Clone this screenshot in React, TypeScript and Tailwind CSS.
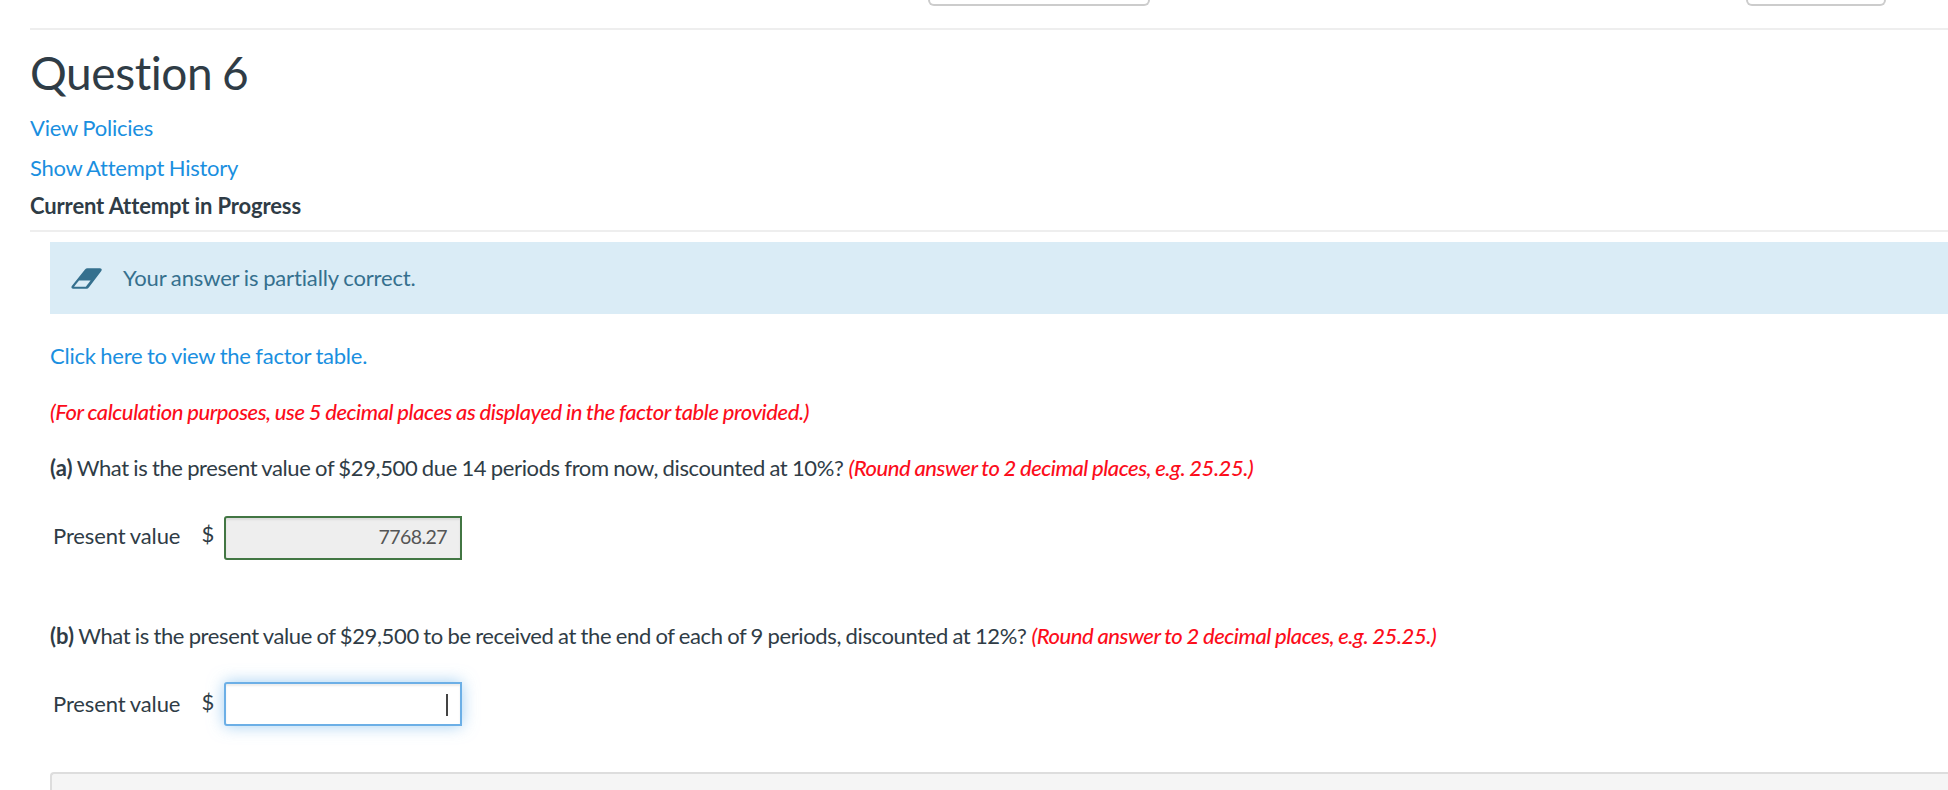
import React from 'react';

interface QuestionProps {
    part: string;
    children: React.ReactNode;
    hint: string;
}

const Question: React.FC<QuestionProps> = ({ part, children, hint }) => {
    return (
        <p>
            <b>({part})</b>
            <span className="ml-[4.2px] tracking-[-0.375px] [word-spacing:-0.7px]">{children}</span>
            <em className="ml-[5px] font-medium tracking-[-0.44px] text-[#fc0d1b] [word-spacing:-0.5px]">{hint}</em>
        </p>
    );
};

interface AnswerProps {
    value?: string;
    active?: boolean;
}

const Answer: React.FC<AnswerProps> = ({ value, active }) => {
    const state = active
        ? 'bg-white border-[#6cafe6] shadow-[inset_0_2px_2px_rgba(0,0,0,0.075),0_0_16px_rgba(102,175,233,0.6)]'
        : 'bg-[#eeeeee] border-[#427643] shadow-[inset_0_2px_2px_rgba(0,0,0,0.075)]';

    return (
        <div className="flex items-start pl-[3px]">
            <div className={`flex ${active ? 'pt-[7px]' : 'pt-[5px]'}`}>
                <span className="w-[148.5px] tracking-[-0.12px] [word-spacing:-0.7px]">Present value</span>
                <span className="-mt-0.5 w-[22.5px]">$</span>
            </div>
            <div
                className={`flex h-[44px] w-[238px] items-center justify-end rounded-l-[3px] border-2 pr-3 text-[19.5px] text-[#555555] ${state}`}
            >
                {value && <span className="mr-px pb-[3px] tracking-[-0.55px]">{value}</span>}
                {active && <span className="mt-[2px] h-[22px] w-[2px] bg-[#444444]" />}
            </div>
        </div>
    );
};

const EraserIcon: React.FC = () => (
    <svg width="31" height="21" viewBox="0 0 31 21" fill="none">
        <path d="M16.5 0.3H29Q31.6 0.5 30.3 3L18 19.2Q17 20.7 15.5 20.7H2Q-0.4 20.3 0.8 18L14 1.5Q15 0.3 16.5 0.3Z" fill="#35708e" />
        <path d="M8 12.4H19.6L14.8 18.7H3Z" fill="#daecf6" />
    </svg>
);

const App: React.FC = () => {
    return (
        <div
            className="h-[790px] overflow-hidden bg-white pl-[30px] text-[22px] leading-[30px] text-[#2f3c46] [font-family:Lato,sans-serif] [font-variant-ligatures:none]"
        >
            <div className="flex h-[28px] items-start justify-between pl-[898px] pr-[62px]">
                <div className="h-[6px] w-[222px] rounded-b-[6px] border-2 border-t-0 border-[#cccccc]" />
                <div className="h-[6px] w-[140px] rounded-b-[6px] border-2 border-t-0 border-[#cccccc]" />
            </div>
            <hr className="border-t-2 border-[#eeeeee]" />

            <h1 className="mt-[15px] text-[46px] leading-[56px] tracking-[-0.42px] [word-spacing:-1.6px]">Question 6</h1>
            <p className="mt-[12px] tracking-[-0.23px] text-[#1a8fe0] [word-spacing:-0.7px]">View Policies</p>
            <p className="mt-[10px] tracking-[-0.25px] text-[#1a8fe0] [word-spacing:-0.7px]">Show Attempt History</p>
            <p className="mt-[8px] font-bold tracking-[-0.13px]">Current Attempt in Progress</p>
            <hr className="mt-[9px] border-t-2 border-[#eeeeee]" />

            <div className="pl-[20px]">
                <div className="mt-[10px] flex h-[72px] items-center bg-[#daecf6] pl-[21px] text-[#35708e]">
                    <EraserIcon />
                    <span className="ml-[21px] tracking-[-0.14px] [word-spacing:-0.7px]">Your answer is partially correct.</span>
                </div>

                <p className="mt-[27px] mb-[26px] tracking-[-0.25px] text-[#1a8fe0] [word-spacing:-0.7px]">
                    Click here to view the factor table.
                </p>
                <p className="mb-[26px]">
                    <em className="font-medium tracking-[-0.43px] text-[#fc0d1b] [word-spacing:-0.5px]">
                        (For calculation purposes, use 5 decimal places as displayed in the factor table provided.)
                    </em>
                </p>

                <Question part="a" hint="(Round answer to 2 decimal places, e.g. 25.25.)">
                    What is the present value of $29,500 due 14 periods from now, discounted at 10%?
                </Question>
                <div className="mt-[33px] mb-[61px]">
                    <Answer value="7768.27" />
                </div>

                <Question part="b" hint="(Round answer to 2 decimal places, e.g. 25.25.)">
                    What is the present value of $29,500 to be received at the end of each of 9 periods, discounted at 12%?
                </Question>
                <div className="mt-[31px] mb-[46px]">
                    <Answer active />
                </div>

                <div className="h-[30px] rounded-tl-[4px] border-t-2 border-l-2 border-[#dddddd] bg-[#f5f5f5]" />
            </div>
        </div>
    );
};

export default App;
